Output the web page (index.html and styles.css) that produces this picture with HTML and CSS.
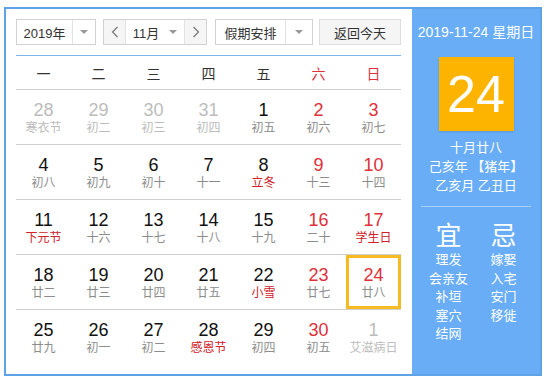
FILE: index.html
```html
<!DOCTYPE html>
<html lang="zh">
<head>
<meta charset="utf-8">
<link rel="stylesheet" href="styles.css">
</head>
<body>
<div class="cal">
  <div class="main">
    <div class="toolbar">
      <div class="sel year"><span class="txt">2019年</span><span class="arr"><i class="tri"></i></span></div>
      <div class="sel month">
        <span class="nav"><svg width="8" height="12" viewBox="0 0 8 12"><path d="M6.5 1 L1.5 6 L6.5 11" fill="none" stroke="#777" stroke-width="1.2"/></svg></span>
        <span class="mid">11月<i class="tri"></i></span>
        <span class="nav"><svg width="8" height="12" viewBox="0 0 8 12"><path d="M1.5 1 L6.5 6 L1.5 11" fill="none" stroke="#777" stroke-width="1.2"/></svg></span>
      </div>
      <div class="sel holiday"><span class="txt">假期安排</span><span class="arr"><i class="tri"></i></span></div>
      <div class="btn">返回今天</div>
    </div>
    <div class="week">
      <span>一</span><span>二</span><span>三</span><span>四</span><span>五</span><span class="red">六</span><span class="red">日</span>
    </div>
    <div class="row">
      <div class="day other"><b>28</b><i>寒衣节</i></div>
      <div class="day other"><b>29</b><i>初二</i></div>
      <div class="day other"><b>30</b><i>初三</i></div>
      <div class="day other"><b>31</b><i>初四</i></div>
      <div class="day"><b>1</b><i>初五</i></div>
      <div class="day wk"><b>2</b><i>初六</i></div>
      <div class="day wk"><b>3</b><i>初七</i></div>
    </div>
    <div class="row">
      <div class="day"><b>4</b><i>初八</i></div>
      <div class="day"><b>5</b><i>初九</i></div>
      <div class="day"><b>6</b><i>初十</i></div>
      <div class="day"><b>7</b><i>十一</i></div>
      <div class="day"><b>8</b><i class="fest">立冬</i></div>
      <div class="day wk"><b>9</b><i>十三</i></div>
      <div class="day wk"><b>10</b><i>十四</i></div>
    </div>
    <div class="row">
      <div class="day"><b>11</b><i class="fest">下元节</i></div>
      <div class="day"><b>12</b><i>十六</i></div>
      <div class="day"><b>13</b><i>十七</i></div>
      <div class="day"><b>14</b><i>十八</i></div>
      <div class="day"><b>15</b><i>十九</i></div>
      <div class="day wk"><b>16</b><i>二十</i></div>
      <div class="day wk"><b>17</b><i class="fest">学生日</i></div>
    </div>
    <div class="row">
      <div class="day"><b>18</b><i>廿二</i></div>
      <div class="day"><b>19</b><i>廿三</i></div>
      <div class="day"><b>20</b><i>廿四</i></div>
      <div class="day"><b>21</b><i>廿五</i></div>
      <div class="day"><b>22</b><i class="fest">小雪</i></div>
      <div class="day wk"><b>23</b><i>廿七</i></div>
      <div class="day wk today"><b>24</b><i>廿八</i></div>
    </div>
    <div class="row">
      <div class="day"><b>25</b><i>廿九</i></div>
      <div class="day"><b>26</b><i>初一</i></div>
      <div class="day"><b>27</b><i>初二</i></div>
      <div class="day"><b>28</b><i class="fest">感恩节</i></div>
      <div class="day"><b>29</b><i>初四</i></div>
      <div class="day wk"><b>30</b><i>初五</i></div>
      <div class="day other"><b>1</b><i>艾滋病日</i></div>
    </div>
  </div>
  <div class="side">
    <div class="date">2019-11-24 星期日</div>
    <div class="big">24</div>
    <div class="lunar">
      <div>十月廿八</div>
      <div>己亥年 【猪年】</div>
      <div>乙亥月 乙丑日</div>
    </div>
    <div class="divider"></div>
    <div class="yiji">
      <div class="col">
        <div class="head">宜</div>
        <div>理发</div><div>会亲友</div><div>补垣</div><div>塞穴</div><div>结网</div>
      </div>
      <div class="col">
        <div class="head">忌</div>
        <div>嫁娶</div><div>入宅</div><div>安门</div><div>移徙</div>
      </div>
    </div>
  </div>
</div>
</body>
</html>
```

FILE: styles.css
```css
* { box-sizing: border-box; }
body {
  margin: 0;
  background: #fff;
  font-family: "Liberation Sans", Arial, "Noto Sans CJK SC", sans-serif;
  color: #333;
}
.cal {
  margin: 7px 0 0 4px;
  width: 538px;
  height: 369px;
  border: 2px solid #5ea2e8;
  display: flex;
}
.main {
  width: 406px;
  padding: 10px 11px 0 10px;
}
.toolbar {
  display: flex;
  height: 26px;
  font-size: 13px;
}
.sel, .btn {
  border: 1px solid #d2d2d2;
  display: flex;
  align-items: stretch;
  background: #fff;
}
.txt {
  display: flex;
  align-items: center;
  justify-content: center;
  border-right: 1px solid #e2e2e2;
}
.arr {
  display: flex;
  align-items: center;
  justify-content: center;
  flex: 1;
}
.tri {
  display: inline-block;
  width: 0;
  height: 0;
  border-left: 4px solid transparent;
  border-right: 4px solid transparent;
  border-top: 4px solid #999;
}
.year { width: 80px; }
.year .txt { width: 56px; }
.month { width: 104px; margin-left: 7px; background: #fafafa; }
.month .nav {
  width: 21px;
  display: flex;
  align-items: center;
  justify-content: center;
  background: #f5f5f5;
}
.month .mid {
  width: 60px;
  border-left: 1px solid #e2e2e2;
  border-right: 1px solid #e2e2e2;
  background: #fff;
  display: flex;
  align-items: center;
  justify-content: center;
  gap: 10px;
}
.holiday { width: 98px; margin-left: 8px; }
.holiday .txt { width: 70px; }
.btn {
  width: 82px;
  margin-left: 6px;
  background: #f5f5f5;
  align-items: center;
  justify-content: center;
  border-color: #dedede;
}
.week {
  margin-top: 10px;
  border-top: 1px solid #7db5ea;
  height: 34px;
  display: grid;
  grid-template-columns: repeat(7, 55px);
  align-items: center;
  font-size: 14px;
  color: #333;
  text-align: center;
}
.week .red { color: #e0303a; }
.row {
  display: grid;
  grid-template-columns: repeat(7, 55px);
  border-top: 1px solid #cfcfcf;
  height: 55px;
}
.day {
  display: flex;
  flex-direction: column;
  align-items: center;
  padding-top: 9px;
}
.day b {
  font-weight: normal;
  font-size: 18px;
  line-height: 22px;
  color: #111;
}
.day i {
  font-style: normal;
  font-size: 12px;
  line-height: 14px;
  color: #8c8c8c;
  white-space: nowrap;
}
.day.wk b { color: #e0303a; }
.day i.fest { color: #d0202a; }
.day.other b, .day.other i { color: #bcbcbc; }
.day.today {
  border: 3px solid #f6bb22;
  padding-top: 6px;
}
.side {
  width: 128px;
  background: #68adf6;
  color: #fff;
  display: flex;
  flex-direction: column;
  align-items: center;
  padding-top: 13px;
}
.date {
  font-size: 14px;
  line-height: 20px;
  white-space: nowrap;
}
.big {
  margin-top: 15px;
  width: 75px;
  height: 74px;
  background: #fdb400;
  font-size: 52px;
  line-height: 74px;
  text-align: center;
  box-shadow: 0 1px 2px rgba(0,0,0,0.12);
}
.lunar {
  margin-top: 7px;
  font-size: 13px;
  line-height: 19px;
  text-align: center;
}
.divider {
  margin-top: 11px;
  width: 110px;
  height: 1px;
  background: rgba(255,255,255,0.45);
}
.yiji {
  margin-top: 14px;
  display: grid;
  grid-template-columns: 55px 55px;
  font-size: 13px;
  line-height: 18.5px;
  text-align: center;
}
.yiji .head {
  font-size: 26px;
  line-height: 30px;
}
```
